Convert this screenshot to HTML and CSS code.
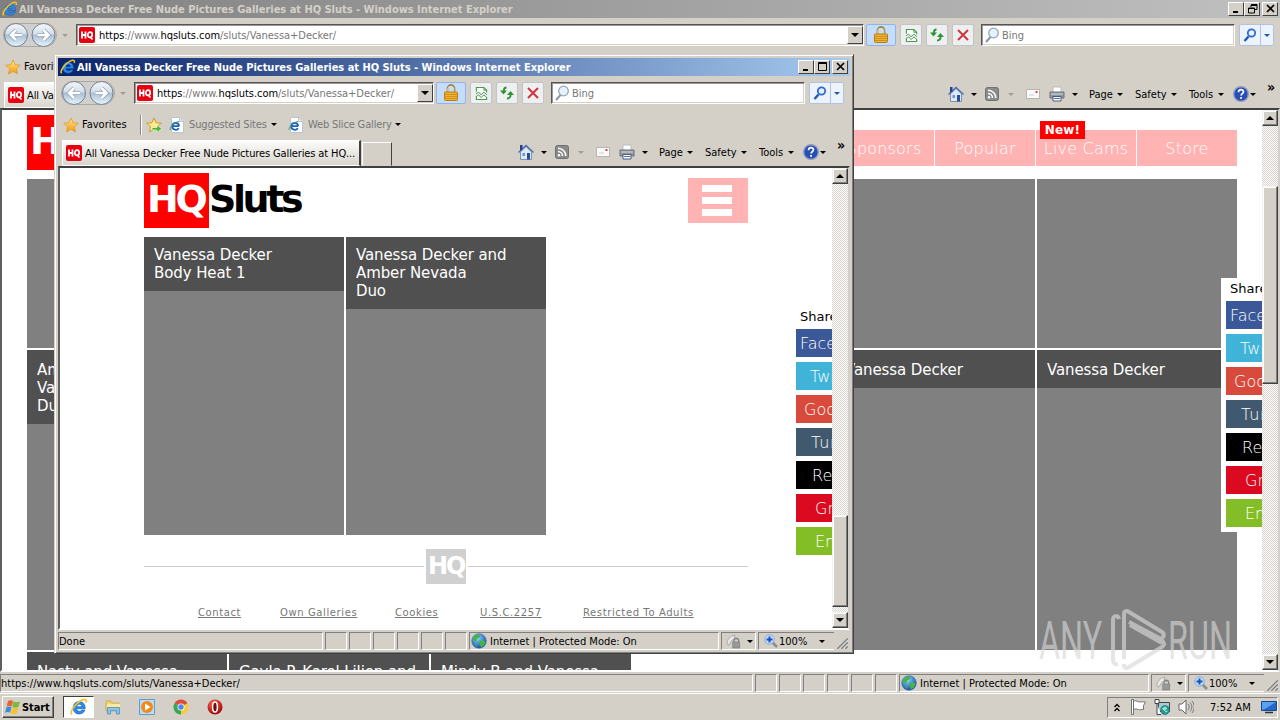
FILE: index.html
```html
<!DOCTYPE html>
<html lang="en">

<head>
    <meta charset="UTF-8">
    <meta name="viewport" content="width=device-width, initial-scale=1.0">
    <title>Desktop</title>
    <link rel="stylesheet" href="styles.css">
</head>

<body>
    <!-- icons -->
    <svg class="defs" width="0" height="0">
        <defs>
            <linearGradient id="gBall" x1="0" y1="0" x2="0" y2="1">
                <stop offset="0" stop-color="#f4f7fa" />
                <stop offset=".45" stop-color="#d3dfeb" />
                <stop offset=".5" stop-color="#a9bfd4" />
                <stop offset="1" stop-color="#e6f6ff" />
            </linearGradient>
            <linearGradient id="gStar" x1="0" y1="0" x2="0" y2="1">
                <stop offset="0" stop-color="#ffe98a" />
                <stop offset="1" stop-color="#f59a10" />
            </linearGradient>
            <radialGradient id="gGlobe" cx=".4" cy=".3" r=".7">
                <stop offset="0" stop-color="#8fd4ff" />
                <stop offset="1" stop-color="#1450a8" />
            </radialGradient>
            <radialGradient id="gRed" cx=".4" cy=".3" r=".7">
                <stop offset="0" stop-color="#ff6a5a" />
                <stop offset="1" stop-color="#a00808" />
            </radialGradient>
        </defs>
        <symbol id="ie" viewBox="0 0 16 16">
            <path d="M13.500 9.600H5.800c.2 1.500 1.300 2.200 2.600 2.200 1 0 1.700-.4 2.200-1.100h2.600c-.8 2.300-2.700 3.500-5 3.500-3.200 0-5.400-2.100-5.400-5.400S5 3.200 8.200 3.200s5.500 2.400 5.300 6.400zM5.900 7.700h4.700C10.400 6.400 9.500 5.600 8.300 5.600S6.100 6.400 5.900 7.700z" fill="#2a8cec" stroke="#0b4fa8" stroke-width=".5" />
            <path d="M1.600 14.600C-.6 12.200 5 4.400 10.500 1.900c2.800-1.300 4.500-.7 3.700 2" fill="none" stroke="#f0c52c" stroke-width="1.500" />
        </symbol>
        <symbol id="iepage" viewBox="0 0 16 16">
            <path d="M2.500 .5h8l4 4v11h-12z" fill="#fff" stroke="#b8c4d0" />
            <path d="M10.500 .5v4h4" fill="#dde6ee" stroke="#b8c4d0" />
            <path d="M10 9.200H3.200M10 9.200c.2-4-6.200-4.400-6.600-.3-.4 4.500 5 4.800 6.300 2.200" fill="none" stroke="#1a62c4" stroke-width="1.800" />
            <path d="M1 13C1 9 6 5 10 4.500" fill="none" stroke="#4a9c5a" stroke-width="1" />
        </symbol>
        <symbol id="hq" viewBox="0 0 16 16">
            <rect width="16" height="16" rx="2" fill="#e80010" />
            <path d="M3 4.500v7M6.500 4.500v7M3 8h4" stroke="#fff" stroke-width="1.800" />
            <ellipse cx="11" cy="7.800" rx="2.200" ry="2.600" fill="none" stroke="#fff" stroke-width="1.700" />
            <path d="M11.500 10.500l2 2" stroke="#fff" stroke-width="1.600" />
        </symbol>
        <symbol id="nav" viewBox="0 0 54 26">
            <rect x=".5" y="1.500" width="53" height="23" rx="11.500" fill="#d0d0ce" stroke="#aaa9a5" />
            <circle cx="13" cy="13" r="11.500" fill="url(#gBall)" stroke="#77808c" />
            <circle cx="40.500" cy="13" r="11.500" fill="url(#gBall)" stroke="#77808c" />
            <path d="M19 13H9M13 8l-5 5 5 5" fill="none" stroke="#8c9cb0" stroke-width="4" />
            <path d="M19 13H9M13 8l-5 5 5 5" fill="none" stroke="#fff" stroke-width="2.600" />
            <path d="M34.500 13h10M40.500 8l5 5-5 5" fill="none" stroke="#8c9cb0" stroke-width="4" />
            <path d="M34.500 13h10M40.500 8l5 5-5 5" fill="none" stroke="#fff" stroke-width="2.600" />
        </symbol>
        <symbol id="lock" viewBox="0 0 16 18">
            <path d="M4.500 9V4.500a3.500 3.500 0 0 1 7 0V9" fill="none" stroke="#a08a50" stroke-width="1.800" />
            <path d="M4.800 8V4.500a3.200 3.200 0 0 1 6 0V8" fill="none" stroke="#efe4b8" stroke-width=".8" />
            <rect x="1.500" y="8" width="13" height="8.500" rx="1" fill="#f0b030" stroke="#b87e10" />
            <path d="M2 10.500h12M2 12.500h12M2 14.500h12" stroke="#c98a18" stroke-width=".8" />
        </symbol>
        <symbol id="compat" viewBox="0 0 14 16">
            <path d="M1.500 6V1.500h8l3 3V7M1.500 11v3.500h11V12" fill="#fff" stroke="#4a9a50" stroke-width="1.200" />
            <path d="M9.500 1.500v3h3M1 8.500l3-2 2.500 3 3-3 3.500 3M1 11.500l3-2 2.500 3 3-3 3.500 3" fill="none" stroke="#4a9a50" />
        </symbol>
        <symbol id="refresh" viewBox="0 0 16 16">
            <path d="M7.500 2.500C5.500 2.500 4.800 4 4.800 6" fill="none" stroke="#2f9236" stroke-width="1.800" />
            <path d="M1 5.500h7L4.500 9.500z" fill="#2f9236" />
            <path d="M8 13.500c2.500 0 3.600-1.500 3.600-4" fill="none" stroke="#2f9236" stroke-width="1.800" />
            <path d="M8 10h7L11.500 6z" fill="#2f9236" />
        </symbol>
        <symbol id="stop" viewBox="0 0 14 14">
            <path d="M2 2l10 10M12 2L2 12" stroke="#d03540" stroke-width="2" />
        </symbol>
        <symbol id="glass" viewBox="0 0 16 16">
            <path d="M7 9.500L2 15" stroke="#8a96a4" stroke-width="2" />
            <circle cx="9.500" cy="6" r="4.800" fill="#e4f2fb" stroke="#96a4b4" stroke-width="1.300" />
        </symbol>
        <symbol id="find" viewBox="0 0 14 14">
            <path d="M5.500 8.500L1.500 13" stroke="#2256c0" stroke-width="2.500" />
            <circle cx="8.500" cy="5" r="3.700" fill="#e8f2ff" stroke="#2f6bd0" stroke-width="1.800" />
        </symbol>
        <symbol id="star" viewBox="0 0 16 16">
            <path d="M8 1l2.100 4.700 5.200.5-3.900 3.500 1.100 5.200L8 12.300l-4.500 2.600 1.100-5.200L.7 6.200l5.200-.5z" fill="url(#gStar)" stroke="#d99a2c" stroke-width=".8" />
        </symbol>
        <symbol id="staradd" viewBox="0 0 16 16">
            <path d="M8 1l2.100 4.700 5.200.5-3.900 3.500 1.100 5.200L8 12.300l-4.500 2.600 1.100-5.200L.7 6.200l5.200-.5z" fill="#ffe98a" stroke="#cf9a2c" />
            <path d="M6 10.500h5V8l5 3.800-5 3.700v-2.500H6z" fill="#4ab43a" stroke="#fff" stroke-width=".6" />
        </symbol>
        <symbol id="home" viewBox="0 0 16 16">
            <path d="M2.500 8v7.500h11V8L8 2.500z" fill="#dfe9f6" stroke="#7c90b0" />
            <path d="M.5 8.500L8 1.500l7.500 7" fill="none" stroke="#4a6cae" stroke-width="1.300" />
            <path d="M2 1h2.500v4L2 7z" fill="#27408c" />
            <path d="M9 9h3v6.500H9z" fill="#274e96" />
            <path d="M4.500 9h2.500v3H4.500z" fill="#6a93d0" />
        </symbol>
        <symbol id="rss" viewBox="0 0 14 14">
            <rect x=".5" y=".5" width="13" height="13" rx="2" fill="#8b8b8b" stroke="#707070" />
            <path d="M3 6.500a4.500 4.500 0 0 1 4.500 4.500M3 3.200A7.800 7.800 0 0 1 10.800 11" fill="none" stroke="#fff" stroke-width="1.500" />
            <circle cx="4" cy="10.200" r="1.200" fill="#fff" />
        </symbol>
        <symbol id="mail" viewBox="0 0 14 10">
            <path d="M.5 .5h13v9H.5z" fill="#fbfbfb" stroke="#b9b3ae" />
            <path d="M9.500 2h2v2h-2z" fill="#e04030" />
            <path d="M3 6h5" stroke="#ccc" />
        </symbol>
        <symbol id="print" viewBox="0 0 16 16">
            <path d="M4 6V1h8v5" fill="#fff" stroke="#b8bcc2" />
            <path d="M1 6h14v6H1z" fill="#90969e" stroke="#6c727c" />
            <path d="M2 8h12" stroke="#d8dce0" />
            <path d="M4 10.500h8v4.500H4z" fill="#fff" stroke="#4a5a78" />
            <path d="M5 12.500h6" stroke="#3e74c0" />
        </symbol>
        <symbol id="help" viewBox="0 0 16 16">
            <circle cx="8" cy="8" r="7.300" fill="#264fb6" stroke="#8d9ac0" stroke-width="1.400" />
            <path d="M5.500 6.200c0-3.300 5-3.200 5-.4 0 1.900-2.400 1.900-2.400 3.800" fill="none" stroke="#fff" stroke-width="1.700" />
            <rect x="7.200" y="11" width="1.800" height="1.800" fill="#fff" />
        </symbol>
        <symbol id="globe" viewBox="0 0 16 16">
            <circle cx="8" cy="8" r="7.300" fill="url(#gGlobe)" stroke="#3a68a4" stroke-width=".6" />
            <path d="M3 3.500C5 1.500 8 1 9.500 2L8.500 4.500 6 5.500 5.500 8 3.500 8.500 1.500 7zM8 8l4-1 2.500 2-1.500 3.500-3 2-1-3zM3.500 10.500l2.500 1-.5 2.500z" fill="#42b649" />
        </symbol>
        <symbol id="shield" viewBox="0 0 16 16">
            <path d="M1 11C1 6 4 3 9 2l-1 3 4 1-6 1-3 5z" fill="#e8e8e8" stroke="#a0a0a0" stroke-width=".8" />
            <path d="M8 9V7.500a2.300 2.300 0 0 1 4.600 0V9" fill="none" stroke="#858585" stroke-width="1.300" />
            <rect x="6.800" y="9" width="7" height="6" fill="#999" stroke="#777" stroke-width=".6" />
        </symbol>
        <symbol id="zoom" viewBox="0 0 14 14">
            <path d="M8 8l5 5" stroke="#8c8c94" stroke-width="2.500" />
            <circle cx="5.500" cy="5.500" r="4.700" fill="#c2e0fa" stroke="#86a8d0" />
            <path d="M5.500 2.500v6M2.500 5.500h6" stroke="#1b50b8" stroke-width="2" />
        </symbol>
        <symbol id="grip" viewBox="0 0 12 12">
            <path d="M0 12L12 0M4 12l8-8M8 12l4-4" stroke="#fff" stroke-width="1" />
            <path d="M1 12L12 1M5 12l7-7M9 12l3-3" stroke="#808080" stroke-width="1.500" />
        </symbol>
        <symbol id="flag" viewBox="0 0 16 16">
            <path d="M1.500 15.500v-15h2v15z" fill="#fff" stroke="#666" stroke-width=".9" />
            <path d="M3.500 2c3-1 4 1 6 1s3-.5 6 0l-2 3.500 0 4c-3 0-3 .5-5 0s-3-1-5 0z" fill="#fff" stroke="#666" stroke-width=".9" />
        </symbol>
        <symbol id="net" viewBox="0 0 16 16">
            <path d="M4.500 3.500h11v9h-11z" fill="#a9cbd8" stroke="#444" />
            <path d="M1 .5h4v4H1zM3 4.500v11h4" fill="#fff" stroke="#444" />
            <circle cx="11" cy="11" r="4.500" fill="#2098a0" stroke="#0e6068" stroke-width=".5" />
            <path d="M8.500 9.500l3-1.500 1 2-2 1.500zM11 13l2.500-1" stroke="#b8f0c0" fill="#8fe09a" />
        </symbol>
        <symbol id="sound" viewBox="0 0 16 16">
            <path d="M1 5h3l4-4v14l-4-4H1z" fill="#fff" stroke="#666" />
            <path d="M10 5c1.500 2 1.500 4 0 6M12 3.500c2.500 3 2.500 6 0 9M14 2c3 4 3 8 0 12" fill="none" stroke="#777" />
        </symbol>
        <symbol id="monitor" viewBox="0 0 16 14">
            <path d="M.5 1.500h15v9H.5z" fill="#2468cc" stroke="#17478e" />
            <path d="M1 2h14L3 9.500H1z" fill="#5a9ff0" />
            <path d="M4 12.500h8" stroke="#333" stroke-width="1.500" />
        </symbol>
        <symbol id="windows" viewBox="0 0 18 16">
            <path d="M4 2c2-1 3.500-1 5 0L7.700 7.500c-1.500-1-3-1-5 0z" fill="#e8602c" />
            <path d="M9.500 2.500c2 1 4 1 6.500 0l-1.600 5.500c-2 1-4 .8-6 0z" fill="#7cb83c" />
            <path d="M2.500 8.200c2-1 3.500-1 5 0L6 13.800c-1.500-1-3-1-5 0z" fill="#3b8cdc" />
            <path d="M8.200 8.800c2 1 4 1 6 0l-1.400 5.400c-2 1-4 .8-6 0z" fill="#f8c020" />
        </symbol>
        <symbol id="folder" viewBox="0 0 16 16">
            <path d="M1 2h5l1 2h7v8H1z" fill="#f1d36c" stroke="#cba440" stroke-width=".8" />
            <path d="M2 5h13v7H2z" fill="#fbeaa0" />
            <path d="M2.500 15V8.500h12V15h-3v-3.500h-6V15z" fill="#8cc4ec" stroke="#4a8cc4" stroke-width=".8" />
        </symbol>
        <symbol id="wmp" viewBox="0 0 16 16">
            <path d="M.5 .5h15v15H.5z" fill="#bcdcf6" stroke="#5c9cd8" />
            <circle cx="8" cy="8" r="6" fill="#f28a18" />
            <path d="M6 4.500v7L11.500 8z" fill="#fff" />
        </symbol>
        <symbol id="chrome" viewBox="0 0 16 16">
            <path d="M8 8L1.500 4.200A7.500 7.500 0 0 1 14.500 4.200z" fill="#dd4b3a" />
            <path d="M8 8l6.500-3.800A7.500 7.500 0 0 1 8 15.500z" fill="#fccb3a" />
            <path d="M8 8v7.500A7.500 7.500 0 0 1 1.500 4.200z" fill="#3aa757" />
            <circle cx="8" cy="8" r="3.500" fill="#fff" />
            <circle cx="8" cy="8" r="2.700" fill="#4a88ee" />
        </symbol>
        <symbol id="opera" viewBox="0 0 16 16">
            <circle cx="8" cy="8" r="7.500" fill="url(#gRed)" />
            <ellipse cx="8" cy="8" rx="2.400" ry="5" fill="#7d0606" stroke="#fff" stroke-width="1.500" />
        </symbol>
    </svg>

    <div class="desktop">

        <!-- maximized window -->
        <div class="window back">
            <div class="titlebar inactive">
                <svg class="i16"><use href="#ie" /></svg>
                <span class="caption">All Vanessa Decker Free Nude Pictures Galleries at HQ Sluts - Windows Internet Explorer</span>
                <div class="sysbtns">
                    <b><svg width="10" height="10"><path d="M1 8h5" stroke="#000" stroke-width="2" /></svg></b>
                    <b><svg width="10" height="10"><path d="M3 .5h6v5H7M3 1.500h6M3 1v2M.5 4h6v5h-6zM0 4.500h7" fill="none" stroke="#000" /></svg></b>
                    <b class="close"><svg width="10" height="10"><path d="M1 1l7 7M8 1L1 8" stroke="#000" stroke-width="1.700" /></svg></b>
                </div>
            </div>
            <div class="address-row">
                <svg class="navbtns"><use href="#nav" /></svg>
                <i class="arrow dim"></i>
                <div class="field url">
                    <svg class="i16"><use href="#hq" /></svg>
                    <span class="urltext"><em>https</em>://www.<em>hqsluts.com</em>/sluts/Vanessa+Decker/</span>
                    <span class="drop"><i class="arrow"></i></span>
                </div>
                <span class="tbtn lock"><svg width="16" height="18"><use href="#lock" /></svg></span>
                <span class="tbtn"><svg width="13" height="15"><use href="#compat" /></svg></span>
                <span class="tbtn"><svg width="16" height="16"><use href="#refresh" /></svg></span>
                <span class="tbtn"><svg width="14" height="14"><use href="#stop" /></svg></span>
                <div class="field search">
                    <svg class="i16"><use href="#glass" /></svg>
                    <span>Bing</span>
                </div>
                <span class="tbtn go"><svg width="14" height="14"><use href="#find" /></svg><u><i class="arrow blue"></i></u></span>
            </div>
            <div class="fav-row">
                <svg class="i16"><use href="#star" /></svg>
                <span class="fav">Favorites</span>
            </div>
            <div class="tab-row">
                <div class="tab">
                    <svg class="i16"><use href="#hq" /></svg>
                    <span>All Vanessa Decker Free Nude Pictures Galleries at HQ...</span>
                </div>
                <div class="newtab"></div>
                <div class="commands">
                    <svg class="i16"><use href="#home" /></svg><i class="arrow a1"></i>
                    <svg class="i14"><use href="#rss" /></svg><i class="arrow dim a2"></i>
                    <svg class="mail"><use href="#mail" /></svg>
                    <svg class="i16"><use href="#print" /></svg><i class="arrow a3"></i>
                    <span class="page">Page</span><i class="arrow"></i>
                    <span class="safety">Safety</span><i class="arrow"></i>
                    <span class="tools">Tools</span><i class="arrow"></i>
                    <svg class="i16 help"><use href="#help" /></svg><i class="arrow"></i>
                    <span class="more">»</span>
                </div>
            </div>
            <div class="viewport">
                <div class="site wide">
                    <div class="head">
                        <div class="logo"><b>HQ</b><span>Sluts</span></div>
                        <div class="menu">
                            <a>Sponsors</a>
                            <a>Popular</a>
                            <a>Live Cams<b class="new">New!</b></a>
                            <a>Store</a>
                        </div>
                    </div>
                    <div class="grid">
                        <div class="card short"></div>
                        <div class="card short"></div>
                        <div class="card short"></div>
                        <div class="card short"></div>
                        <div class="card short"></div>
                        <div class="card short"></div>
                        <div class="card"><p>Amber and<br>Vanessa<br>Duo</p></div>
                        <div class="card"></div>
                        <div class="card"></div>
                        <div class="card"></div>
                        <div class="card"><p>Vanessa Decker</p></div>
                        <div class="card"><p>Vanessa Decker</p></div>
                        <div class="card"><p>Nasty and Vanessa</p></div>
                        <div class="card"><p>Gayla P. Karol Lilien and</p></div>
                        <div class="card"><p>Mindy B and Vanessa</p></div>
                    </div>
                </div>
                <div class="share">
                    <p>Share</p>
                    <a class="fb">Facebook</a>
                    <a class="tw">Twitter</a>
                    <a class="gp">Google+</a>
                    <a class="tu">Tumblr</a>
                    <a class="re">Reddit</a>
                    <a class="gr">Grab it</a>
                    <a class="em">Email</a>
                </div>
                <div class="scrollbar">
                    <span class="sbtn"><i class="arrow up"></i></span>
                    <span class="thumb"></span>
                    <span class="sbtn"><i class="arrow"></i></span>
                </div>
            </div>
            <div class="status">
                <span class="panel msg">https://www.hqsluts.com/sluts/Vanessa+Decker/</span>
                <span class="panel"></span><span class="panel"></span><span class="panel"></span>
                <span class="panel"></span><span class="panel"></span><span class="panel"></span>
                <span class="panel zone"><svg class="i16"><use href="#globe" /></svg>Internet | Protected Mode: On</span>
                <span class="panel prot"><svg class="i16"><use href="#shield" /></svg><i class="arrow"></i></span>
                <span class="panel pct"><svg class="i14"><use href="#zoom" /></svg>100%<i class="arrow"></i></span>
                <svg class="grip"><use href="#grip" /></svg>
            </div>
        </div>

        <!-- popup window -->
        <div class="window front">
            <div class="titlebar">
                <svg class="i16"><use href="#ie" /></svg>
                <span class="caption">All Vanessa Decker Free Nude Pictures Galleries at HQ Sluts - Windows Internet Explorer</span>
                <div class="sysbtns">
                    <b><svg width="10" height="10"><path d="M1 8h5" stroke="#000" stroke-width="2" /></svg></b>
                    <b><svg width="10" height="10"><path d="M.5 .5h8v8h-8zM0 1.500h9" fill="none" stroke="#000" /></svg></b>
                    <b class="close"><svg width="10" height="10"><path d="M1 1l7 7M8 1L1 8" stroke="#000" stroke-width="1.700" /></svg></b>
                </div>
            </div>
            <div class="address-row">
                <svg class="navbtns"><use href="#nav" /></svg>
                <i class="arrow dim"></i>
                <div class="field url">
                    <svg class="i16"><use href="#hq" /></svg>
                    <span class="urltext"><em>https</em>://www.<em>hqsluts.com</em>/sluts/Vanessa+Decker/</span>
                    <span class="drop"><i class="arrow"></i></span>
                </div>
                <span class="tbtn lock"><svg width="16" height="18"><use href="#lock" /></svg></span>
                <span class="tbtn"><svg width="13" height="15"><use href="#compat" /></svg></span>
                <span class="tbtn"><svg width="16" height="16"><use href="#refresh" /></svg></span>
                <span class="tbtn"><svg width="14" height="14"><use href="#stop" /></svg></span>
                <div class="field search">
                    <svg class="i16"><use href="#glass" /></svg>
                    <span>Bing</span>
                </div>
                <span class="tbtn go"><svg width="14" height="14"><use href="#find" /></svg><u><i class="arrow blue"></i></u></span>
            </div>
            <div class="fav-row">
                <svg class="i16"><use href="#star" /></svg>
                <span class="fav">Favorites</span>
                <span class="sep"></span>
                <svg class="i16"><use href="#staradd" /></svg>
                <svg class="i16 pg"><use href="#iepage" /></svg>
                <span class="link sites">Suggested Sites</span><i class="arrow"></i>
                <svg class="i16 pg2"><use href="#iepage" /></svg>
                <span class="link slice">Web Slice Gallery</span><i class="arrow"></i>
            </div>
            <div class="tab-row">
                <div class="tab">
                    <svg class="i16"><use href="#hq" /></svg>
                    <span>All Vanessa Decker Free Nude Pictures Galleries at HQ...</span>
                </div>
                <div class="newtab"></div>
                <div class="commands">
                    <svg class="i16"><use href="#home" /></svg><i class="arrow a1"></i>
                    <svg class="i14"><use href="#rss" /></svg><i class="arrow dim a2"></i>
                    <svg class="mail"><use href="#mail" /></svg>
                    <svg class="i16"><use href="#print" /></svg><i class="arrow a3"></i>
                    <span class="page">Page</span><i class="arrow"></i>
                    <span class="safety">Safety</span><i class="arrow"></i>
                    <span class="tools">Tools</span><i class="arrow"></i>
                    <svg class="i16 help"><use href="#help" /></svg><i class="arrow"></i>
                    <span class="more">»</span>
                </div>
            </div>
            <div class="viewport">
                <div class="site narrow">
                    <div class="head">
                        <div class="logo"><b>HQ</b><span>Sluts</span></div>
                        <div class="burger"><i></i><i></i><i></i></div>
                    </div>
                    <div class="grid">
                        <div class="card"><p>Vanessa Decker<br>Body Heat 1</p></div>
                        <div class="card"><p>Vanessa Decker and<br>Amber Nevada<br>Duo</p></div>
                    </div>
                    <div class="rule"><hr><b>HQ</b><hr></div>
                    <div class="footlinks">
                        <a class="l1">Contact</a>
                        <a class="l2">Own Galleries</a>
                        <a class="l3">Cookies</a>
                        <a class="l4">U.S.C.2257</a>
                        <a class="l5">Restricted To Adults</a>
                    </div>
                </div>
                <div class="share">
                    <p>Share</p>
                    <a class="fb">Facebook</a>
                    <a class="tw">Twitter</a>
                    <a class="gp">Google+</a>
                    <a class="tu">Tumblr</a>
                    <a class="re">Reddit</a>
                    <a class="gr">Grab it</a>
                    <a class="em">Email</a>
                </div>
                <div class="scrollbar">
                    <span class="sbtn"><i class="arrow up"></i></span>
                    <span class="thumb"></span>
                    <span class="sbtn"><i class="arrow"></i></span>
                </div>
            </div>
            <div class="status">
                <span class="panel msg">Done</span>
                <span class="panel"></span><span class="panel"></span><span class="panel"></span>
                <span class="panel"></span><span class="panel"></span><span class="panel"></span>
                <span class="panel zone"><svg class="i16"><use href="#globe" /></svg>Internet | Protected Mode: On</span>
                <span class="panel prot"><svg class="i16"><use href="#shield" /></svg><i class="arrow"></i></span>
                <span class="panel pct"><svg class="i14"><use href="#zoom" /></svg>100%<i class="arrow"></i></span>
                <svg class="grip"><use href="#grip" /></svg>
            </div>
        </div>

        <!-- watermark -->
        <div class="watermark">
            <span class="any">ANY</span>
            <svg width="58" height="66" viewBox="0 0 58 66">
                <path d="M9 12C8 8 3 8 3 13v40c0 3 2 5 5 4M14 52V8c0-4 2-5 5-3l33 20c3 2 2 5-1 7L19 15M52 34c3 2 3 4 0 6L19 60c-3 2-5 1-5-3M20 18l32 18" />
            </svg>
            <span class="run">RUN</span>
        </div>

        <div class="taskbar">
            <div class="start"><svg width="18" height="16"><use href="#windows" /></svg>Start</div>
            <div class="task"><svg class="i18"><use href="#ie" /></svg></div>
            <svg class="i16 q"><use href="#folder" /></svg>
            <svg class="i16 q"><use href="#wmp" /></svg>
            <svg class="i16 q"><use href="#chrome" /></svg>
            <svg class="i16 q"><use href="#opera" /></svg>
            <div class="tray">
                <svg width="6" height="9"><path d="M.5 4l2.500-2.500L5.500 4M.5 8l2.500-2.500L5.500 8" fill="none" stroke="#000" stroke-width="1.300" /></svg>
                <svg class="i16 flag"><use href="#flag" /></svg>
                <svg class="i16 net"><use href="#net" /></svg>
                <svg class="i16 snd"><use href="#sound" /></svg>
                <span class="clock">7:52 AM</span>
                <svg width="16" height="14"><use href="#monitor" /></svg>
            </div>
        </div>
    </div>
</body>

</html>
```

FILE: styles.css
```css
* {
    box-sizing: border-box;
}

body {
    margin: 0;
    font-family: "DejaVu Sans Condensed", "DejaVu Sans", Tahoma, sans-serif;
    font-stretch: condensed;
    font-size: 11px;
    color: #000;
}

svg {
    display: block;
    flex: none;
}

.defs {
    position: absolute;
}

.desktop {
    position: relative;
    width: 1280px;
    height: 720px;
    overflow: hidden;
    background-color: #d4d0c8;
}

.i16 {
    width: 16px;
    height: 16px;
}

.i14 {
    width: 14px;
    height: 14px;
}

.i18 {
    width: 18px;
    height: 18px;
}

/* windows */

.window {
    position: absolute;
    display: flex;
    flex-direction: column;
    padding: 2px;
    border: 2px solid;
    border-color: #e8e6e0 #404040 #404040 #e8e6e0;
    background-color: #d4d0c8;
    white-space: nowrap;
}

.back {
    left: -4px;
    top: -4px;
    width: 1288px;
    height: 700px;
}

.front {
    left: 54px;
    top: 54px;
    width: 800px;
    height: 600px;
    border-width: 1px;
    border-top-color: #d4d0c8;
    border-left-color: #d4d0c8;
    padding: 3px;
    box-shadow: inset 1px 1px 0 #fff, inset -1px -1px 0 #808080;
}

.titlebar {
    height: 18px;
    flex: none;
    display: flex;
    align-items: center;
    padding: 0 2px;
    background: linear-gradient(to right, #0a246a, #a6caf0);
    color: #fff;
    font-weight: bold;
}

.titlebar.inactive {
    background: linear-gradient(to right, #808080, #c0c0c0);
    color: #d4d0c8;
}

.caption {
    margin-left: 1px;
    flex: 1;
    letter-spacing: -0.02px;
}

.sysbtns {
    display: flex;
}

.sysbtns b {
    width: 16px;
    height: 14px;
    padding: 1px 0 0 3px;
    background-color: #d4d0c8;
    border: 1px solid;
    border-color: #fff #404040 #404040 #fff;
}

.sysbtns .close {
    margin-left: 2px;
}

.arrow {
    flex: none;
    width: 0;
    height: 0;
    border: 3px solid transparent;
    border-top-color: #000;
    border-bottom: 0;
}

.arrow.dim {
    border-top-color: #a09c98;
}

.arrow.blue {
    border-top-color: #2458b0;
}

.arrow.up {
    border: 4px solid transparent;
    border-bottom-color: #000;
    border-top: 0;
}

.address-row {
    height: 34px;
    flex: none;
    display: flex;
    align-items: center;
    padding: 0 6px 0 3px;
}

.navbtns {
    width: 54px;
    height: 26px;
}

.address-row > .arrow {
    margin: 0 8px 0 5px;
}

.field {
    height: 22px;
    display: flex;
    align-items: center;
    background-color: #fff;
    border: 1px solid;
    border-color: #555 #fff #fff #555;
    box-shadow: inset 1px 1px 0 #999, inset -1px -1px 0 #d4d0c8;
}

.url {
    flex: 1;
    padding-left: 2px;
}

.urltext {
    flex: 1;
    margin-left: 4px;
    color: #777;
    letter-spacing: -0.04px;
}

.urltext em {
    font-style: normal;
    color: #000;
}

.drop {
    width: 16px;
    height: 18px;
    display: flex;
    align-items: center;
    justify-content: center;
    background-color: #d4d0c8;
    border: 1px solid;
    border-color: #fff #404040 #404040 #fff;
}

.drop .arrow {
    border-width: 4px 4px 0;
}

.tbtn {
    flex: none;
    width: 22px;
    height: 22px;
    display: flex;
    align-items: center;
    justify-content: center;
    margin-left: 4px;
    border: 1px solid #c0c4cc;
    border-radius: 2px;
    background-color: #eef0f0;
}

.tbtn.lock {
    width: 30px;
    margin-left: 2px;
    background-color: #c6dcfb;
    border-color: #8fb4ea;
}

.search {
    width: 254px;
    margin-left: 7px;
    padding-left: 2px;
    color: #777;
}

.search span {
    margin-left: 2px;
}

.go {
    width: 35px;
    justify-content: flex-start;
    padding-left: 3px;
    background-color: #edf3fc;
    border-color: #b3c2dc;
}

.go u {
    height: 20px;
    display: flex;
    align-items: center;
    margin-left: 3px;
    padding-left: 3px;
    border-left: 1px solid #b3c2dc;
}

.fav-row {
    height: 30px;
    flex: none;
    display: flex;
    align-items: center;
    padding: 0 0 1px 5px;
}

.fav {
    width: 50px;
    margin-left: 3px;
}

.sep {
    width: 2px;
    height: 20px;
    margin: 0 4px 0 8px;
    border-left: 1px solid #888;
    border-right: 1px solid #fff;
}

.pg {
    margin-left: 7px;
}

.pg2 {
    margin-left: 11px;
}

.link {
    margin-left: 4px;
    color: #777;
    letter-spacing: -0.15px;
}

.sites {
    width: 82px;
}

.slice {
    width: 87px;
}

.tab-row {
    height: 26px;
    flex: none;
    display: flex;
    align-items: flex-end;
    padding-left: 4px;
}

.tab {
    width: 299px;
    height: 26px;
    flex: none;
    display: flex;
    align-items: center;
    padding-left: 3px;
    border: 1px solid;
    border-color: #fff #404040 transparent #fff;
    border-right-width: 2px;
    background: linear-gradient(#fcfcfa, #d8d5ce);
}

.tab span {
    margin-left: 3px;
    letter-spacing: -0.12px;
}

.newtab {
    width: 30px;
    height: 24px;
    margin-left: 1px;
    border: 1px solid;
    border-color: #fff #404040 transparent #fff;
}

.commands {
    height: 26px;
    display: flex;
    align-items: center;
    margin-left: auto;
    padding: 0 4px 2px 0;
}

.a1 {
    margin: 0 8px 0 7px;
}

.a2 {
    margin: 0 12px 0 9px;
}

.a3 {
    margin: 0 11px 0 7px;
}

.mail {
    width: 14px;
    height: 10px;
    margin-right: 9px;
}

.page {
    width: 28px;
}

.safety {
    width: 36px;
    margin-left: 12px;
}

.tools {
    width: 29px;
    margin-left: 12px;
}

.help {
    margin: 0 1px 0 9px;
}

.more {
    width: 9px;
    height: 24px;
    margin-left: 11px;
    font-size: 14px;
    line-height: 11px;
    font-weight: bold;
}

/* page area */

.viewport {
    position: relative;
    flex: 1;
    display: flex;
    min-height: 0;
    overflow: hidden;
    background-color: #fff;
    border: 2px solid;
    border-color: #404040 #d4d0c8 #fff #606060;
}

.site {
    flex: 1;
    min-width: 0;
    overflow: hidden;
    font-family: "DejaVu Sans", Verdana, sans-serif;
    font-stretch: normal;
}

.head {
    display: flex;
    padding-top: 5px;
    height: 69px;
}

.logo {
    display: flex;
    height: 55px;
    font-weight: bold;
    font-size: 38px;
    line-height: 52px;
    letter-spacing: -3.4px;
}

.logo b {
    width: 65px;
    padding-left: 3px;
    background-color: #f00;
    color: #fff;
}

.wide {
    padding-left: 25px;
}

.wide .head {
    width: 1210px;
    justify-content: space-between;
}

.menu {
    display: flex;
    gap: 1px;
    margin-top: 15px;
}

.menu a {
    position: relative;
    width: 100px;
    height: 36px;
    line-height: 37px;
    text-align: center;
    font-size: 16px;
    font-weight: 200;
    letter-spacing: 0.2px;
    color: #fff;
    background-color: #ffb3b3;
}

.new {
    position: absolute;
    left: 4px;
    top: -9px;
    width: 45px;
    height: 18px;
    background-color: #f00;
    font-size: 12px;
    line-height: 19px;
    font-weight: bold;
}

.grid {
    display: flex;
    flex-wrap: wrap;
    gap: 2px;
}

.wide .grid {
    width: 1210px;
}

.card {
    width: 200px;
    height: 300px;
    background-color: #808080;
}

.card.short {
    height: 169px;
}

.card p {
    margin: 0;
    padding: 9px 10px;
    background-color: #505050;
    color: #fff;
    font-size: 15px;
    line-height: 18px;
    letter-spacing: -0.1px;
}

.wide .card p {
    padding: 11px 10px 9px;
}

.share {
    position: absolute;
    right: 16px;
    top: 168px;
    width: 41px;
    height: 254px;
    padding: 5px 0 0 5px;
    overflow: hidden;
    background-color: #fff;
    font-family: "DejaVu Sans", Verdana, sans-serif;
    font-stretch: normal;
    font-size: 16px;
    font-weight: 200;
}

.share p {
    height: 18px;
    margin: 0;
    padding-left: 4px;
    font-size: 13px;
    line-height: 12px;
    font-weight: normal;
}

.share a {
    display: block;
    height: 28px;
    margin-bottom: 5px;
    line-height: 29px;
    color: #fff;
}

.front .share {
    top: 138px;
}

.fb {
    padding-left: 4px;
    background-color: #3b5998;
}

.tw {
    padding-left: 14px;
    background-color: #40b4d8;
}

.gp {
    padding-left: 8px;
    background-color: #d84a3b;
}

.share .tu {
    padding-left: 15px;
    letter-spacing: 0.8px;
    background-color: #40596f;
}

.re {
    padding-left: 16px;
    background-color: #000;
}

.gr {
    padding-left: 19px;
    background-color: #dc0a20;
}

.em {
    padding-left: 19px;
    background-color: #84be26;
}

.scrollbar {
    width: 16px;
    flex: none;
    display: flex;
    flex-direction: column;
    background: repeating-conic-gradient(#fff 0 25%, #d8d4cd 0 50%) 0 0 / 2px 2px;
}

.sbtn,
.thumb {
    flex: none;
    height: 16px;
    display: flex;
    align-items: center;
    justify-content: center;
    background-color: #d4d0c8;
    border: 1px solid;
    border-color: #f4f2ee #404040 #404040 #f4f2ee;
    box-shadow: inset -1px -1px 0 #808080, inset 1px 1px 0 #fff;
}

.sbtn .arrow {
    border-left-width: 4px;
    border-right-width: 4px;
}

.sbtn .arrow:not(.up) {
    border-top-width: 4px;
}

.sbtn:last-child {
    margin-top: auto;
}

.back .thumb {
    margin-top: 60px;
    height: 198px;
}

.front .thumb {
    margin-top: 331px;
    height: 92px;
}

/* small layout */

.narrow {
    padding-left: 84px;
}

.narrow .head,
.rule {
    width: 604px;
}

.narrow .head {
    justify-content: space-between;
}

.burger {
    width: 60px;
    height: 45px;
    margin-top: 5px;
    padding: 7px 16px 0 14px;
    background-color: #ffb3b3;
}

.burger i {
    display: block;
    height: 7px;
    margin-bottom: 5px;
    background-color: #fff;
}

.narrow .card {
    height: 298px;
}

.rule {
    display: flex;
    align-items: center;
    gap: 2px;
    margin-top: 14px;
}

.rule hr {
    flex: 1;
    margin: 0;
    border: 0;
    border-top: 1px solid #ccc;
}

.rule b {
    width: 40px;
    height: 35px;
    padding-left: 2px;
    background-color: #d0d0d0;
    color: #fff;
    font-size: 24px;
    line-height: 34px;
    letter-spacing: -2px;
}

.footlinks {
    display: flex;
    margin: 23px 0 0 54px;
    font-size: 10px;
    letter-spacing: 0.6px;
    color: #777;
    text-decoration: underline;
}

.l1 {
    width: 82px;
}

.l2 {
    width: 115px;
}

.l3 {
    width: 85px;
}

.l4 {
    width: 103px;
}

/* status bar */

.status {
    height: 20px;
    flex: none;
    display: flex;
    gap: 2px;
    padding-top: 2px;
}

.panel {
    width: 22px;
    height: 18px;
    display: flex;
    align-items: center;
    border: 1px solid;
    border-color: #808080 #fff #fff #808080;
}

.msg {
    flex: 1;
}

.zone {
    width: 250px;
}

.zone svg {
    margin: 0 3px 0 1px;
}

.prot {
    width: 35px;
    padding-left: 4px;
}

.prot .arrow {
    margin-left: 5px;
}

.pct {
    width: 76px;
    padding-left: 5px;
    border-right: 0;
}

.pct svg {
    margin-right: 1px;
}

.pct .arrow {
    margin-left: auto;
    margin-right: 9px;
}

.grip {
    width: 12px;
    height: 12px;
    margin-top: 5px;
    margin-right: 2px;
}

/* watermark */

.watermark {
    position: absolute;
    left: 1039px;
    top: 607px;
    display: flex;
    color: rgba(215, 215, 215, 0.65);
    font-family: Roboto, sans-serif;
    font-stretch: normal;
    font-weight: 400;
    font-size: 53px;
    line-height: 68px;
}

.watermark span {
    width: 61px;
    transform: scaleX(0.61);
    transform-origin: left;
}

.watermark svg {
    margin-left: 10px;
}

.watermark path {
    fill: none;
    stroke: rgba(215, 215, 215, 0.65);
    stroke-width: 4;
}

/* taskbar */

.taskbar {
    position: absolute;
    left: 0;
    top: 693px;
    width: 1280px;
    height: 27px;
    display: flex;
    align-items: center;
    padding: 0 2px;
    background-color: #d4d0c8;
    border-top: 1px solid #fff;
}

.start {
    width: 52px;
    height: 22px;
    display: flex;
    align-items: center;
    padding-left: 1px;
    border: 1px solid;
    border-color: #fff #404040 #404040 #fff;
    box-shadow: inset -1px -1px 0 #808080;
    font-weight: bold;
    letter-spacing: -0.1px;
}

.task {
    width: 31px;
    height: 22px;
    display: flex;
    align-items: center;
    justify-content: center;
    margin: 0 11px 0 9px;
    background-color: #fff;
    border: 1px solid;
    border-color: #404040 #fff #fff #404040;
}

.q {
    margin-right: 18px;
}

.tray {
    width: 171px;
    height: 21px;
    display: flex;
    align-items: center;
    margin-left: auto;
    padding-left: 6px;
    border: 1px solid;
    border-color: #808080 #fff #fff #808080;
}

.flag {
    margin-left: 10px;
}

.net {
    margin-left: 8px;
}

.snd {
    margin-left: 8px;
}

.clock {
    width: 51px;
    margin-left: 16px;
}
```
